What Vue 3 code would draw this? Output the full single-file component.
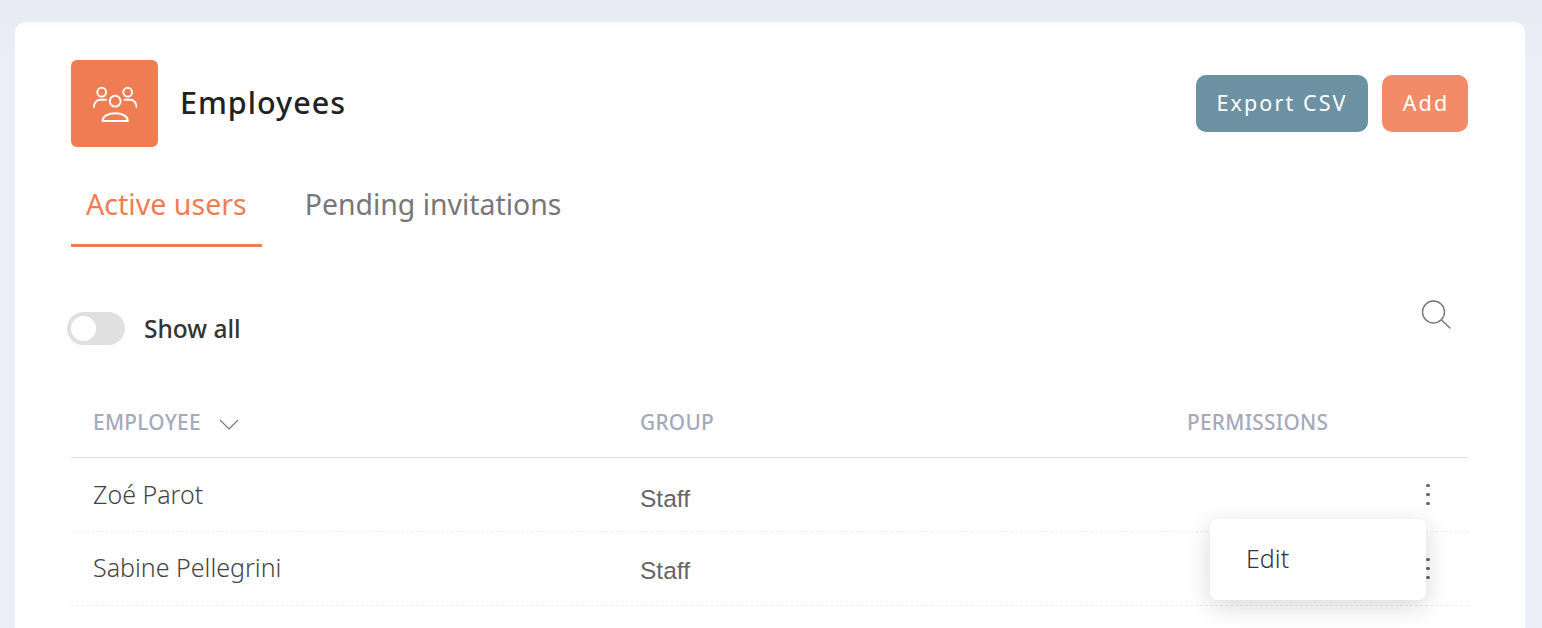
<template>
  <div class="page">
    <div class="card">
      <div class="head">
        <div class="head-icon">
          <svg width="44" height="36" viewBox="0 0 44 36" fill="none" stroke="#fff" stroke-width="1.9" stroke-linecap="round" stroke-linejoin="round">
            <circle cx="22.200" cy="15.200" r="5.400" />
            <circle cx="8.700" cy="6.200" r="4.400" />
            <circle cx="34.700" cy="6.200" r="4.400" />
            <path d="M1 21c0-4 2.600-7.200 6.400-7.200h5.600" />
            <path d="M43.500 21c0-4-2.600-7.200-6.400-7.200h-5.600" />
            <path d="M9.500 35c0-4.600 5.500-7.800 12.700-7.800s12.700 3.200 12.700 7.800z" />
          </svg>
        </div>
        <h1 class="title">Employees</h1>
        <div class="actions">
          <button class="btn export">Export CSV</button>
          <button class="btn add">Add</button>
        </div>
      </div>

      <div class="tabs">
        <div class="tab active">Active users</div>
        <div class="tab">Pending invitations</div>
      </div>

      <div class="tools">
        <div class="toggle-wrap">
          <span class="toggle"><span class="knob"></span></span>
          <span class="toggle-label">Show all</span>
        </div>
        <svg class="search" width="31" height="29" viewBox="0 0 31 29" fill="none" stroke="#777" stroke-width="1.4" stroke-linecap="round">
          <circle cx="12.500" cy="12" r="11" />
          <path d="M20.500 20l8.500 8" />
        </svg>
      </div>

      <div class="table">
        <div class="row header">
          <div class="cell">
            EMPLOYEE
            <svg class="chevron" width="20" height="11" viewBox="0 0 20 11" fill="none" stroke="#6f7280" stroke-width="1.1">
              <path d="M1 1l9 9 9-9" />
            </svg>
          </div>
          <div class="cell">GROUP</div>
          <div class="cell">PERMISSIONS</div>
          <div></div>
        </div>
        <div v-for="emp in employees" :key="emp.name" class="row body">
          <div class="name">{{ emp.name }}</div>
          <div class="group">{{ emp.group }}</div>
          <div></div>
          <div class="dots"><i></i><i></i><i></i></div>
        </div>
        <div class="menu">Edit</div>
      </div>
    </div>
  </div>
</template>

<script setup>
const employees = [
  { name: 'Zoé Parot', group: 'Staff' },
  { name: 'Sabine Pellegrini', group: 'Staff' }
]
</script>

<style scoped>
.page {
  height: 628px;
  overflow: hidden;
  padding: 22px 17px 0 15px;
  box-sizing: border-box;
  background: linear-gradient(#e8eaf3, #ebeef8 60px);
  font-family: "Noto Sans", "Open Sans", sans-serif;
}
.card {
  height: 700px;
  box-sizing: border-box;
  padding: 38px 57px 0 56px;
  border-radius: 10px;
  background: linear-gradient(#fdfdfc, #fff 12px);
}
.head {
  display: flex;
  align-items: center;
  height: 87px;
}
.head-icon {
  width: 87px;
  height: 87px;
  border-radius: 6px;
  background: #f07c54;
  display: flex;
  align-items: center;
  justify-content: center;
}
.title {
  margin: 0 0 3px 22px;
  font-size: 30.500px;
  font-weight: 500;
  letter-spacing: 1px;
  color: #222;
}
.actions {
  margin-left: auto;
  display: flex;
  gap: 14px;
}
.btn {
  height: 57px;
  border: 0;
  border-radius: 10px;
  padding: 0 0 2px;
  font-family: inherit;
  font-size: 21.500px;
  letter-spacing: 2.100px;
  color: #fff;
}
.export {
  width: 172px;
  background: #6c91a3;
}
.add {
  width: 86px;
  padding-left: 2px;
  background: #f38b68;
}
.tabs {
  display: flex;
  gap: 28px;
  margin-top: 30px;
}
.tab {
  height: 70px;
  padding: 0 15px;
  box-sizing: border-box;
  font-size: 28.400px;
  line-height: 54px;
  color: #777;
}
.tab.active {
  font-size: 28.600px;
  color: #f07c54;
  border-bottom: 3px solid #f07c54;
}
.tools {
  display: flex;
  justify-content: space-between;
  align-items: flex-start;
  height: 139px;
  margin-left: -4px;
  padding-top: 53px;
  padding-right: 16px;
  box-sizing: border-box;
}
.toggle-wrap {
  display: flex;
  align-items: center;
  gap: 19px;
  margin-top: 12px;
}
.toggle {
  width: 58px;
  height: 33px;
  border-radius: 17px;
  background: #e0e0e0;
  display: flex;
  align-items: center;
  padding-left: 4px;
  box-sizing: border-box;
}
.knob {
  width: 25px;
  height: 25px;
  border-radius: 50%;
  background: #fff;
}
.toggle-label {
  font-size: 24.500px;
  font-weight: 500;
  line-height: 29px;
  color: #333;
}
.table {
  position: relative;
}
.row {
  display: grid;
  grid-template-columns: 547px 547px 1fr 80px;
  align-items: center;
  padding-left: 22px;
}
.header {
  height: 71px;
  border-bottom: 1px solid #e0e0e0;
  font-size: 20.800px;
  font-weight: 500;
  letter-spacing: 0.3px;
  color: #a5a9bc;
}
.chevron {
  margin-left: 12px;
}
.body {
  height: 74px;
  box-sizing: border-box;
  border-bottom: 1px dashed #eceef4;
}
.name {
  font-size: 25px;
  font-weight: 300;
  color: #444;
  padding-bottom: 2px;
}
.group {
  font-family: "Liberation Sans", Arial, sans-serif;
  font-size: 24.500px;
  color: #666;
  padding-top: 9px;
}
.body:nth-child(3) .name {
  padding-bottom: 4px;
}
.body:nth-child(3) .group {
  padding-top: 5px;
}
.dots {
  display: flex;
  flex-direction: column;
  align-items: center;
  gap: 5.500px;
}
.dots i {
  width: 3.500px;
  height: 3.500px;
  border-radius: 50%;
  background: #666;
}
.menu {
  position: absolute;
  left: 1139px;
  top: 133px;
  width: 216px;
  height: 81px;
  padding-left: 36px;
  box-sizing: border-box;
  border-radius: 8px;
  background: #fff;
  box-shadow: 0 6px 24px rgba(0, 0, 0, 0.16);
  font-size: 25px;
  font-weight: 300;
  line-height: 79px;
  color: #333;
}
</style>
